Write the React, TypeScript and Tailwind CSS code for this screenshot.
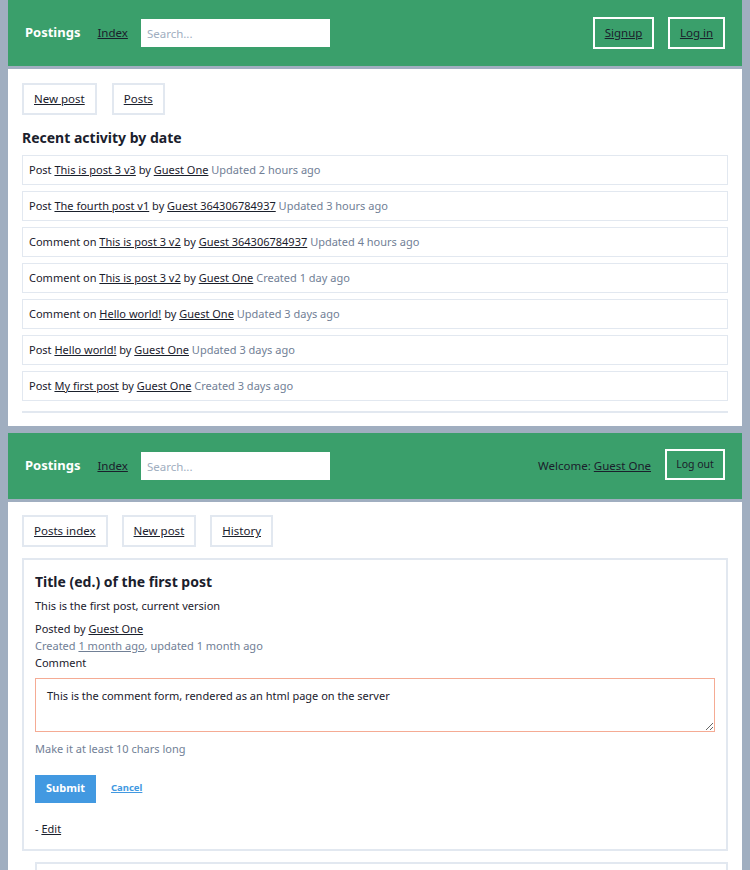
import React from "react";

const font = { fontFamily: '"Noto Sans", "Open Sans", sans-serif' };

type Item = { kind: string; title: string; by: string; when: string };

const activity: Item[] = [
  { kind: "Post", title: "This is post 3 v3", by: "Guest One", when: "Updated 2 hours ago" },
  { kind: "Post", title: "The fourth post v1", by: "Guest 364306784937", when: "Updated 3 hours ago" },
  { kind: "Comment on", title: "This is post 3 v2", by: "Guest 364306784937", when: "Updated 4 hours ago" },
  { kind: "Comment on", title: "This is post 3 v2", by: "Guest One", when: "Created 1 day ago" },
  { kind: "Comment on", title: "Hello world!", by: "Guest One", when: "Updated 3 days ago" },
  { kind: "Post", title: "Hello world!", by: "Guest One", when: "Updated 3 days ago" },
  { kind: "Post", title: "My first post", by: "Guest One", when: "Created 3 days ago" },
];

function Header({ right }: { right: React.ReactNode }) {
  return (
    <div className="h-[69px] bg-[#3a9f6b] border-b-[3px] border-[#a0aec0] flex items-center pl-[17px] pr-[17px]">
      <span className="text-white font-bold text-[13px]">Postings</span>
      <a href="#" className="ml-[17px] text-[11.5px] underline text-[#1a202c]">Index</a>
      <input
        placeholder="Search..."
        className="ml-[13px] w-[189px] h-[28px] bg-white px-[6px] text-[11.5px] outline-none placeholder:text-[#a0aec0]"
      />
      <div className="ml-auto flex items-center">{right}</div>
    </div>
  );
}

function NavButton({ label }: { label: string }) {
  return (
    <a href="#" className="h-[32px] px-[10px] flex items-center border-2 border-[#e2e8f0] text-[11.5px] underline text-[#1a202c]">
      {label}
    </a>
  );
}

export default function App() {
  return (
    <div className="bg-[#a0aec0] h-[870px] overflow-hidden pl-[8px] pr-[8px] text-[#1a202c]" style={font}>
      {/* first page */}
      <div className="bg-white h-[426px] flex flex-col">
        <Header
          right={
            <>
              <a href="#" className="h-[32px] w-[61px] justify-center flex items-center border-2 border-white text-[11.5px] underline text-[#1a202c]">Signup</a>
              <a href="#" className="ml-[14px] h-[32px] w-[57px] justify-center flex items-center border-2 border-white text-[11.5px] underline text-[#1a202c]">Log in</a>
            </>
          }
        />
        <div className="px-[14px] pt-[14px]">
          <div className="flex gap-[15px]">
            <NavButton label="New post" />
            <NavButton label="Posts" />
          </div>
          <h2 className="mt-[14px] font-bold text-[14px] leading-[18px]">Recent activity by date</h2>
          <div className="mt-[8px] flex flex-col gap-[6px]">
            {activity.map((a, i) => (
              <div key={i} className="h-[30px] border border-[#e2e8f0] flex items-center px-[6px] text-[11px] whitespace-nowrap">
                {a.kind}&nbsp;<a href="#" className="underline">{a.title}</a>&nbsp;by&nbsp;
                <a href="#" className="underline">{a.by}</a>&nbsp;<span className="text-[#718096]">{a.when}</span>
              </div>
            ))}
          </div>
          <div className="mt-[10px] border-t-2 border-[#e2e8f0]" />
        </div>
      </div>

      {/* second page */}
      <div className="bg-white mt-[7px] flex flex-col">
        <Header
          right={
            <>
              <span className="text-[11.5px]">Welcome: <a href="#" className="underline">Guest One</a></span>
              <button className="ml-[14px] mb-[3px] h-[31px] w-[60px] border-2 border-white text-[10.5px] text-[#1a202c]">Log out</button>
            </>
          }
        />
        <div className="px-[14px] pt-[13px]">
          <div className="flex gap-[14px]">
            <NavButton label="Posts index" />
            <NavButton label="New post" />
            <NavButton label="History" />
          </div>
          <div className="mt-[11px] border-2 border-[#e2e8f0] px-[11px] pt-[12px] pb-[12px]">
            <h1 className="font-bold text-[14px] leading-[20px]">Title (ed.) of the first post</h1>
            <p className="mt-[6px] text-[11px] leading-[16px]">This is the first post, current version</p>
            <p className="mt-[7px] text-[11px] leading-[16px]">Posted by <a href="#" className="underline">Guest One</a></p>
            <p className="text-[11px] leading-[17px] text-[#718096]">
              Created <a href="#" className="underline">1 month ago</a>, updated 1 month ago
            </p>
            <p className="text-[11px] leading-[17px]">Comment</p>
            <textarea
              className="mt-[7px] block w-full h-[54px] border border-[#f5ab94] px-[11px] py-[9px] text-[11px] text-[#1a202c] outline-none"
              defaultValue="This is the comment form, rendered as an html page on the server"
            />
            <p className="mt-[9px] text-[11px] text-[#718096]">Make it at least 10 chars long</p>
            <div className="mt-[17px] flex items-center">
              <button className="h-[28px] w-[61px] bg-[#4299e1] text-white font-bold text-[11px]">Submit</button>
              <a href="#" className="ml-[15px] text-[#4299e1] font-bold text-[9.5px] underline">Cancel</a>
            </div>
            <p className="mt-[18px] text-[11px]">- <a href="#" className="underline">Edit</a></p>
          </div>
          <div className="mt-[11px] ml-[13px] h-[40px] border-2 border-[#e2e8f0]" />
        </div>
      </div>
    </div>
  );
}
